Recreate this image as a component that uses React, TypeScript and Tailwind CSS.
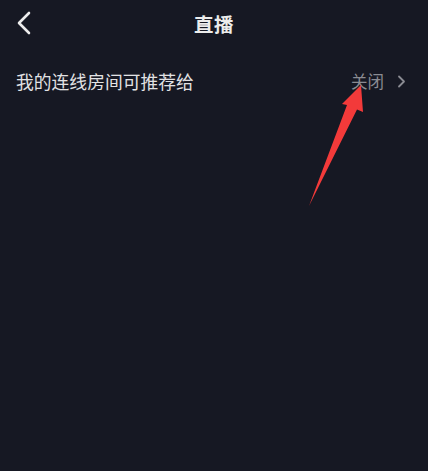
export default function App() {
  return (
    <div
      className="w-[428px] h-[471px] bg-[#161823] relative overflow-hidden"
      style={{ fontFamily: '"Noto Sans CJK SC", "Noto Sans", sans-serif' }}
    >
      {/* header */}
      <div className="h-12 relative flex items-center justify-center">
        <button className="absolute left-[15px] top-[10px] w-[18px] h-[26px] flex items-center justify-center">
          <svg width="16" height="24" viewBox="0 0 16 24" fill="none">
            <path d="M13 2 L3 12 L13 22" stroke="#ececec" strokeWidth="2.6" strokeLinecap="round" strokeLinejoin="round" />
          </svg>
        </button>
        <h1 className="text-[19.5px] font-bold text-[#ececec] tracking-[0.5px]">直播</h1>
      </div>

      {/* setting row */}
      <div className="h-[66px] flex items-center justify-between pl-4 pr-[22px]">
        <span className="text-[17.8px] text-[#e2e2e4]">我的连线房间可推荐给</span>
        <div className="flex items-center gap-[13px]">
          <span className="text-[16.5px] text-[#8a8b92]">关闭</span>
          <svg width="9" height="13" viewBox="0 0 9 13" fill="none">
            <path d="M2 1.5 L7 6.5 L2 11.5" stroke="#8a8b92" strokeWidth="1.8" strokeLinecap="round" strokeLinejoin="round" />
          </svg>
        </div>
      </div>

      {/* red annotation arrow */}
      <svg className="absolute left-0 top-0 pointer-events-none" width="428" height="471" viewBox="0 0 428 471">
        <polygon points="361,85 363,112 357,109.5 309,206 347,105 342,104" fill="#f33a3a" />
      </svg>
    </div>
  );
}
